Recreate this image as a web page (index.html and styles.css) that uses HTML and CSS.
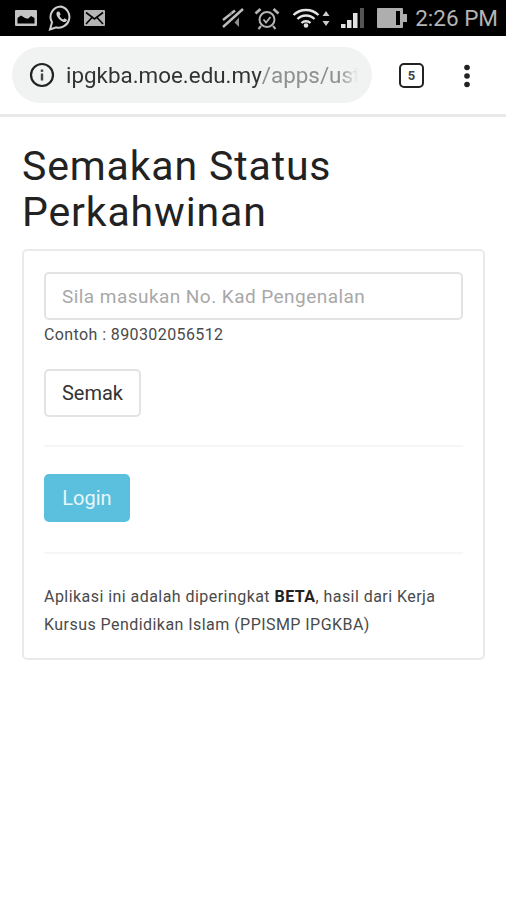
FILE: index.html
```html
<!DOCTYPE html>
<html lang="ms">
<head>
<meta charset="utf-8">
<title>Semakan Status Perkahwinan</title>
<link rel="stylesheet" href="styles.css">
</head>
<body>
<header class="statusbar">
  <div class="status-left">
    <svg class="ic pic" width="22" height="16" viewBox="0 0 22 16"><rect width="22" height="16" rx="1" fill="#c4c4c4"/><path d="M2.500 13.500V8l3.500-2.500 4 2.500 3 .8 3-2.800 3.500 2v5.500z" fill="#000"/></svg>
    <svg class="ic wa" width="25" height="26" viewBox="0 0 25 26"><path d="M13 1.500a10.500 10.500 0 0 0-9 15.800L2 24.500l6.400-2.100A10.500 10.500 0 1 0 13 1.500z" fill="none" stroke="#cfcfcf" stroke-width="2"/><path d="M9.500 6.500c-1.500 1-1.500 3 0 5.500s4 4.500 6 5c2 .3 3.300-.8 3.500-2.300l-2.500-1.500-1.300 1.300c-1.500-.5-3-2-3.700-3.700l1.200-1.300-1.300-2.700z" fill="#cfcfcf"/></svg>
    <svg class="ic mail" width="21" height="16" viewBox="0 0 21 16"><rect width="21" height="16" rx="1" fill="#b4b4b4"/><path d="M2 2.500l8.500 6.500 8.500-6.500M2 14l6-6.500M19 14l-6-6.500" fill="none" stroke="#000" stroke-width="1.600"/></svg>
  </div>
  <div class="status-right">
    <svg class="ic mute" width="22" height="20" viewBox="0 0 22 20"><path d="M17 9.500V19l-4.500-4.500z" fill="#8f8f8f"/><path d="M1 12L13 2.500M1 19L21 1" stroke="#bdbdbd" stroke-width="2.400" fill="none"/><path d="M2 6.500h4l4-3v3z" fill="#8a8a8a"/></svg>
    <svg class="ic alarm" width="26" height="23" viewBox="0 0 26 23"><circle cx="13" cy="12.500" r="7.500" fill="none" stroke="#b4b4b4" stroke-width="2"/><path d="M9.500 12.500l2.500 3 4.500-5.500" fill="none" stroke="#b4b4b4" stroke-width="1.800"/><path d="M1.500 6.500L6.500 2M24.500 6.500L19.500 2" stroke="#b4b4b4" stroke-width="2.800"/><path d="M7 19l-2.500 3M19 19l2.500 3" stroke="#b4b4b4" stroke-width="2"/></svg>
    <svg class="ic wifi" width="38" height="20" viewBox="0 0 38 20"><path d="M1.500 7a18 18 0 0 1 25 0M5.500 11a12 12 0 0 1 17 0M9.500 15a6.500 6.500 0 0 1 9 0" fill="none" stroke="#e4e4e4" stroke-width="2.400"/><circle cx="14" cy="17.500" r="2.300" fill="#e4e4e4"/><path d="M34 3l3.500 5h-7zM34 18l3.500-5h-7z" fill="#cccccc"/></svg>
    <svg class="ic signal" width="25" height="20" viewBox="0 0 25 20"><rect x="1" y="16" width="4.500" height="4" fill="#e0e0e0"/><rect x="7" y="12" width="4.500" height="8" fill="#e0e0e0"/><rect x="13" y="5" width="4.500" height="15" fill="#e0e0e0"/><rect x="20" y="0" width="4" height="20" fill="#555"/></svg>
    <svg class="ic battery" width="30" height="20" viewBox="0 0 30 20"><rect x="0" y="0" width="26" height="20" rx="1" fill="#aeaeae"/><rect x="19" y="3" width="4" height="14" fill="#000"/><rect x="26" y="6" width="4" height="8" fill="#aeaeae"/></svg>
    <span class="time">2:26 PM</span>
  </div>
</header>
<nav class="toolbar">
  <div class="omnibox">
    <svg class="info" width="26" height="26" viewBox="0 0 26 26"><circle cx="13" cy="13" r="11" fill="none" stroke="#222" stroke-width="2.200"/><rect x="11.800" y="11.500" width="2.400" height="7" fill="#444"/><rect x="11.800" y="7.500" width="2.400" height="2.400" fill="#444"/></svg>
    <div class="url"><span class="host">ipgkba.moe.edu.my</span><span class="path">/apps/ust</span></div>
  </div>
  <div class="tabs">5</div>
  <svg class="menu" width="8" height="24" viewBox="0 0 8 24"><circle cx="4" cy="3.500" r="2.800" fill="#222"/><circle cx="4" cy="12" r="2.800" fill="#222"/><circle cx="4" cy="20.500" r="2.800" fill="#222"/></svg>
</nav>
<main class="page">
  <h1 class="title">Semakan Status Perkahwinan</h1>
  <section class="card">
    <input class="field" type="text" placeholder="Sila masukan No. Kad Pengenalan">
    <p class="hint">Contoh : 890302056512</p>
    <button class="btn btn-default" type="button">Semak</button>
    <hr class="rule rule-first">
    <button class="btn btn-info" type="button">Login</button>
    <hr class="rule rule-second">
    <p class="note">Aplikasi ini adalah diperingkat <strong>BETA</strong>, hasil dari Kerja Kursus Pendidikan Islam (PPISMP IPGKBA)</p>
  </section>
</main>
</body>
</html>
```

FILE: styles.css
```css
* { box-sizing: border-box; }
html, body { margin: 0; padding: 0; }
body { width: 506px; height: 900px; overflow: hidden; background: #fff; font-family: Roboto, "Liberation Sans", sans-serif; color: #333; }

.statusbar { height: 36px; background: #000; display: flex; justify-content: space-between; align-items: center; padding: 0 8px 0 15px; }
.status-left, .status-right { display: flex; align-items: center; }
.ic { display: block; }
.pic { margin-right: 11px; }
.wa { margin-right: 11px; }
.mute { margin-right: 10px; }
.alarm { margin-right: 12px; }
.wifi { margin-right: 10px; }
.signal { margin-right: 12px; }
.time { font-size: 22.500px; color: #b4b4b4; margin-left: 8px; white-space: nowrap; }

.toolbar { height: 81px; display: flex; align-items: center; padding: 0 0 0 12px; border-bottom: 3px solid #e9e9e9; }
.omnibox { width: 360px; height: 56px; border-radius: 28px; background: #f1f3f3; display: flex; align-items: center; padding-left: 17px; gap: 11px; overflow: hidden; }
.info { flex: none; }
.url { font-size: 22.400px; line-height: 30px; white-space: nowrap; overflow: hidden; width: 292px; -webkit-mask-image: linear-gradient(to right, #000 94%, transparent); mask-image: linear-gradient(to right, #000 94%, transparent); }
.host { color: #333; }
.path { color: #8f8f8f; }
.tabs { width: 25px; height: 25px; margin-left: 27px; border: 2.500px solid #222; border-radius: 5px; font-size: 13px; font-weight: 700; color: #444; display: flex; align-items: center; justify-content: center; }
.menu { margin-left: 39px; margin-top: 2px; }

.page { padding: 26px 21px 0 22px; }
.title { margin: 0 0 14px; font-size: 41px; line-height: 46px; font-weight: 400; color: #222; letter-spacing: .85px; }
.card { border: 2px solid #eaeaea; border-radius: 5px; padding: 21px 20px 0; height: 411px; }
.field { display: block; width: 100%; height: 48px; border: 2px solid #e3e3e3; border-radius: 5px; padding: 0 16px; font: 19px Roboto, sans-serif; color: #333; letter-spacing: .45px; }
.field::placeholder { color: #a8a8a8; opacity: 1; }
.hint { margin: 5px 0 0; font-size: 16px; line-height: 20px; color: #4a4a4a; letter-spacing: .4px; }
.btn { display: block; height: 48px; border-radius: 5px; font: 20px Roboto, sans-serif; padding: 0; }
.btn-default { margin-top: 24px; width: 97px; background: #fff; border: 2px solid #e3e3e3; color: #333; }
.btn-info { width: 86px; background: #5bc0de; border: 0; color: #e8f6fa; }
.rule { border: 0; border-top: 2px solid #f6f6f6; margin: 0; }
.rule-first { margin: 28px 0 27px; }
.rule-second { margin: 30px 0 29px; }
.note { margin: 0; font-size: 16px; line-height: 28px; color: #4a4a4a; letter-spacing: .45px; }
.note strong { color: #222; font-weight: 700; }
```
